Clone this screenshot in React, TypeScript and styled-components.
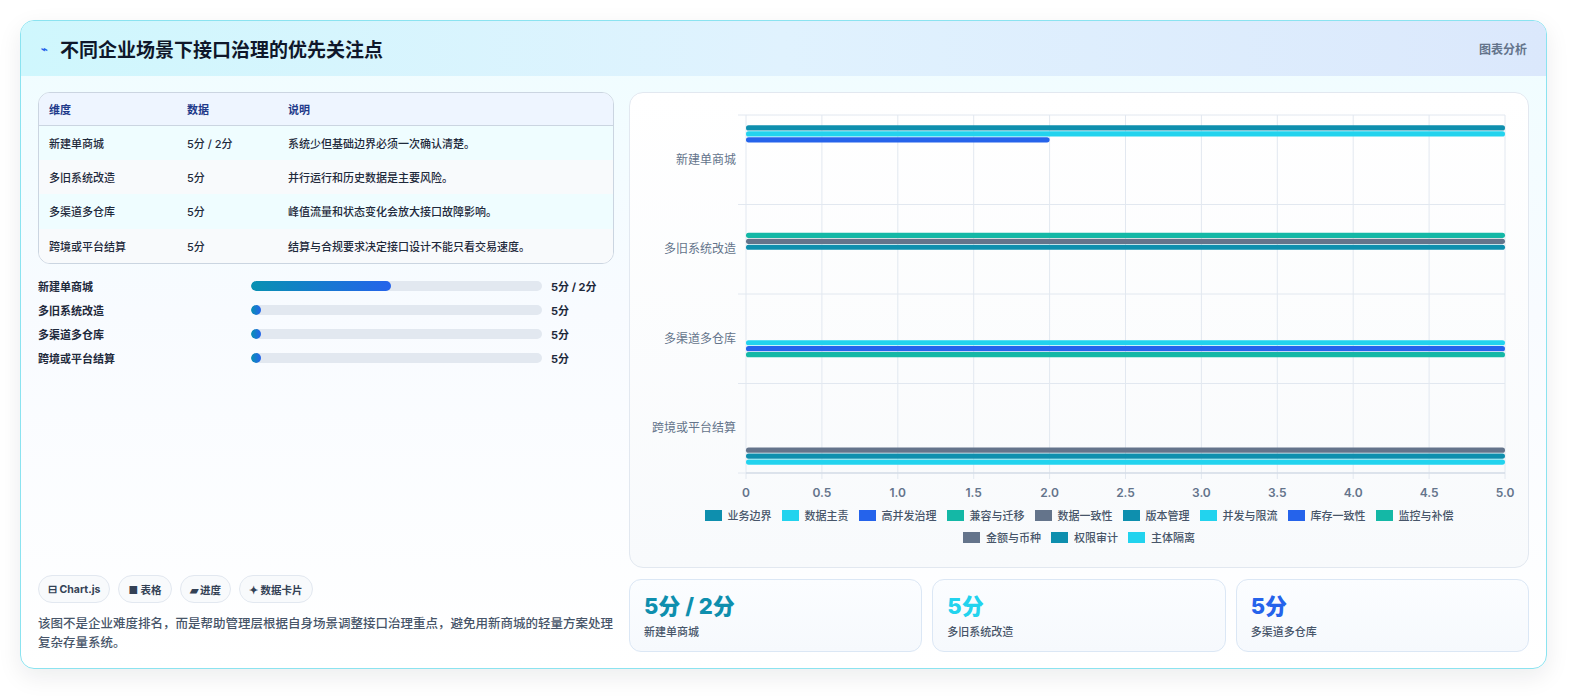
import React from "react";
import styled, { createGlobalStyle } from "styled-components";

const Global = createGlobalStyle`
  html, body { margin: 0; padding: 0; background: #ffffff; overflow: hidden; }
  body { font-family: Inter, "Noto Sans CJK SC", sans-serif; color: #0f172a; }
  * { box-sizing: border-box; }
`;

const Page = styled.div`
  padding: 20px 32px 27px 20px;
`;
const Card = styled.div`
  height: 649px;
  border: 1px solid #8be3f0;
  border-radius: 14px;
  overflow: hidden;
  background: linear-gradient(180deg, #effdff 0%, #f8fbff 45%, #ffffff 100%);
  box-shadow: 0 8px 24px rgba(15, 23, 42, 0.08);
  display: flex;
  flex-direction: column;
`;
const Header = styled.div`
  height: 55px;
  flex: none;
  display: flex;
  align-items: center;
  justify-content: space-between;
  padding: 0 19px 0 20px;
  background: linear-gradient(90deg, #cff7fd 0%, #e0f2fe 50%, #dbe8fc 100%);
`;
const Title = styled.h1`
  margin: 0;
  font-size: 19px;
  font-weight: 700;
  color: #0f172a;
  display: flex;
  align-items: center;
  gap: 12px;
`;
const Bolt = styled.span`
  color: #2563eb;
  font-size: 11px;
`;
const HeadTag = styled.span`
  font-size: 12px;
  font-weight: 600;
  color: #64748b;
`;
const Body = styled.div`
  flex: 1;
  display: grid;
  grid-template-columns: 576px 900px;
  gap: 15px;
  padding: 16px 17px 17px 17px;
`;
const Left = styled.div`
  display: flex;
  flex-direction: column;
`;
const TableWrap = styled.div`
  border: 1px solid #cbd5e1;
  border-radius: 12px;
  overflow: hidden;
  background: #ffffff;
`;
const Table = styled.table`
  width: 100%;
  border-collapse: collapse;
  font-size: 11px;
  font-weight: 500;
`;
const Th = styled.th`
  text-align: left;
  font-weight: 600;
  color: #1e3a8a;
  background: #eef5ff;
  height: 32px;
  padding: 0 10px;
  border-bottom: 1px solid #cbd5e1;
`;
const Tr = styled.tr<{ $alt: boolean }>`
  background: ${(p) => (p.$alt ? "#f8fafc" : "#effdff")};
  & + & td { border-top: 1px solid #e2e8f0; }
`;
const Td = styled.td`
  height: 34.5px;
  padding: 0 10px;
  color: #1e293b;
`;
const Bars = styled.div`
  margin-top: 14px;
  display: flex;
  flex-direction: column;
  gap: 8px;
`;
const BarRow = styled.div`
  display: grid;
  grid-template-columns: 213px 291px 72px;
  align-items: center;
  height: 16px;
  font-size: 11px;
  font-weight: 600;
  color: #1e293b;
`;
const Track = styled.div`
  height: 10px;
  border-radius: 5px;
  background: #e2e8f0;
  overflow: hidden;
`;
const Fill = styled.div`
  height: 100%;
  border-radius: 5px;
  background: linear-gradient(90deg, #0891b2, #2563eb);
`;
const BarVal = styled.span`
  padding-left: 9px;
  font-weight: 700;
`;
const Spacer = styled.div`
  flex: 1;
`;
const Chips = styled.div`
  display: flex;
  gap: 8px;
`;
const Chip = styled.span`
  height: 28px;
  padding: 0 9px;
  border: 1px solid #e2e8f0;
  border-radius: 14px;
  background: #f8fafc;
  font-size: 10.5px;
  font-weight: 700;
  color: #334155;
  display: flex;
  align-items: center;
  gap: 3px;
`;
const Note = styled.p`
  margin: 11px 0 0;
  font-size: 12.5px;
  line-height: 19px;
  font-weight: 500;
  color: #475569;
`;
const Right = styled.div`
  display: flex;
  flex-direction: column;
  gap: 11px;
`;
const ChartPanel = styled.div`
  height: 476px;
  border: 1px solid #e2e8f0;
  border-radius: 14px;
  background: linear-gradient(180deg, #ffffff, #f8fafc);
  display: flex;
  flex-direction: column;
`;
const Legend = styled.div`
  display: flex;
  flex-wrap: wrap;
  justify-content: center;
  column-gap: 10px;
  row-gap: 6px;
  padding: 0 40px 0 40px;
  margin-top: 4px;
  font-size: 11px;
  font-weight: 500;
  color: #475569;
`;
const LegItem = styled.span`
  display: flex;
  align-items: center;
  gap: 6px;
  height: 16px;
`;
const Swatch = styled.i<{ $c: string }>`
  width: 17px;
  height: 11px;
  background: ${(p) => p.$c};
`;
const Stats = styled.div`
  display: grid;
  grid-template-columns: repeat(3, 1fr);
  gap: 10px;
`;
const Stat = styled.div`
  height: 73px;
  border: 1px solid #dbe7f5;
  border-radius: 12px;
  background: linear-gradient(180deg, #fbfdff, #f6f9fd);
  padding: 12px 14px;
`;
const StatNum = styled.div<{ $c: string }>`
  font-size: 22px;
  font-weight: 800;
  line-height: 28px;
  color: ${(p) => p.$c};
`;
const StatLabel = styled.div`
  font-size: 11px;
  color: #475569;
  margin-top: 3px;
  font-weight: 500;
`;

const rows = [
  ["新建单商城", "5分 / 2分", "系统少但基础边界必须一次确认清楚。", 48],
  ["多旧系统改造", "5分", "并行运行和历史数据是主要风险。", 0],
  ["多渠道多仓库", "5分", "峰值流量和状态变化会放大接口故障影响。", 0],
  ["跨境或平台结算", "5分", "结算与合规要求决定接口设计不能只看交易速度。", 0],
] as const;

const series = [
  ["业务边界", "#0e8fae"],
  ["数据主责", "#22d3ee"],
  ["高并发治理", "#2563eb"],
  ["兼容与迁移", "#14b8a6"],
  ["数据一致性", "#64748b"],
  ["版本管理", "#0e8fae"],
  ["并发与限流", "#22d3ee"],
  ["库存一致性", "#2563eb"],
  ["监控与补偿", "#14b8a6"],
  ["金额与币种", "#64748b"],
  ["权限审计", "#0e8fae"],
  ["主体隔离", "#22d3ee"],
];
const values = [5, 5, 2, 5, 5, 5, 5, 5, 5, 5, 5, 5];

function Chart() {
  const x0 = 116, x1 = 875, y0 = 22, y1 = 380;
  const band = (y1 - y0) / 4;
  const sx = (v: number) => x0 + (v / 5) * (x1 - x0);
  const cats = ["新建单商城", "多旧系统改造", "多渠道多仓库", "跨境或平台结算"];
  const slot = (band * 0.8) / 12;
  return (
    <svg width="898" height="410" style={{ display: "block" }}>
      {Array.from({ length: 11 }, (_, i) => (
        <g key={i}>
          <line x1={sx(i * 0.5)} x2={sx(i * 0.5)} y1={y0} y2={y1 + 6} stroke="#e2e8f0" />
          <text x={sx(i * 0.5)} y={y1 + 24} fontSize="12" fontWeight="600" fill="#64748b" textAnchor="middle" fontFamily="Inter, sans-serif">
            {i === 0 ? "0" : (i * 0.5).toFixed(1)}
          </text>
        </g>
      ))}
      {Array.from({ length: 5 }, (_, i) => (
        <line key={i} x1={x0 - 8} x2={x1} y1={y0 + i * band} y2={y0 + i * band} stroke="#e2e8f0" />
      ))}
      <line x1={x0} x2={x1} y1={y1} y2={y1} stroke="#cbd5e1" />
      {cats.map((c, i) => (
        <text key={c} x={x0 - 10} y={y0 + band * i + band / 2 + 4} fontSize="12" fill="#64748b" textAnchor="end" fontFamily='"Noto Sans CJK SC", sans-serif'>
          {c}
        </text>
      ))}
      {series.map(([, col], k) => {
        const ci = Math.floor(k / 3);
        const cy = y0 + ci * band + band * 0.1 + (k + 0.5) * slot + 1;
        return <rect key={k} x={x0} y={cy - 2.6} width={sx(values[k]) - x0} height={5.2} rx={2.6} fill={col} />;
      })}
    </svg>
  );
}

export default function App() {
  return (
    <Page>
      <Global />
      <Card>
        <Header>
          <Title>
            <Bolt>⌁</Bolt>不同企业场景下接口治理的优先关注点
          </Title>
          <HeadTag>图表分析</HeadTag>
        </Header>
        <Body>
          <Left>
            <TableWrap>
              <Table>
                <thead>
                  <tr>
                    <Th style={{ width: 138 }}>维度</Th>
                    <Th style={{ width: 101 }}>数据</Th>
                    <Th>说明</Th>
                  </tr>
                </thead>
                <tbody>
                  {rows.map((r, i) => (
                    <Tr key={r[0]} $alt={i % 2 === 1}>
                      <Td>{r[0]}</Td>
                      <Td>{r[1]}</Td>
                      <Td>{r[2]}</Td>
                    </Tr>
                  ))}
                </tbody>
              </Table>
            </TableWrap>
            <Bars>
              {rows.map((r) => (
                <BarRow key={r[0]}>
                  <span>{r[0]}</span>
                  <Track>
                    <Fill style={{ width: r[3] ? `${r[3]}%` : "10px" }} />
                  </Track>
                  <BarVal>{r[1]}</BarVal>
                </BarRow>
              ))}
            </Bars>
            <Spacer />
            <Chips>
              <Chip>⊟ Chart.js</Chip>
              <Chip>■ 表格</Chip>
              <Chip>▰ 进度</Chip>
              <Chip>✦ 数据卡片</Chip>
            </Chips>
            <Note>
              该图不是企业难度排名，而是帮助管理层根据自身场景调整接口治理重点，避免用新商城的轻量方案处理复杂存量系统。
            </Note>
          </Left>
          <Right>
            <ChartPanel>
              <Chart />
              <Legend>
                {series.map(([n, c]) => (
                  <LegItem key={n}>
                    <Swatch $c={c} />
                    {n}
                  </LegItem>
                ))}
              </Legend>
            </ChartPanel>
            <Stats>
              <Stat>
                <StatNum $c="#0e8fae">5分 / 2分</StatNum>
                <StatLabel>新建单商城</StatLabel>
              </Stat>
              <Stat>
                <StatNum $c="#22d3ee">5分</StatNum>
                <StatLabel>多旧系统改造</StatLabel>
              </Stat>
              <Stat>
                <StatNum $c="#2563eb">5分</StatNum>
                <StatLabel>多渠道多仓库</StatLabel>
              </Stat>
            </Stats>
          </Right>
        </Body>
      </Card>
    </Page>
  );
}
